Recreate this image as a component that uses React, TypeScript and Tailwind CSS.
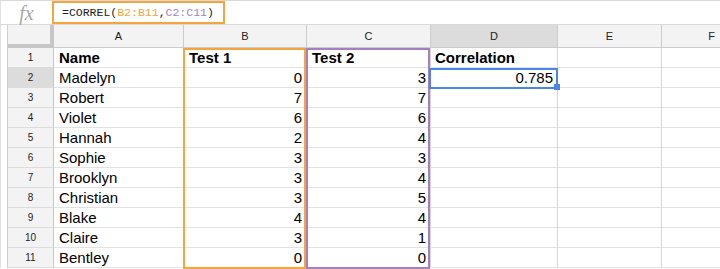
import React from "react";

export default function App() {
  const rows: [string, string, string, string][] = [
    ["Name", "Test 1", "Test 2", "Correlation"],
    ["Madelyn", "0", "3", "0.785"],
    ["Robert", "7", "7", ""],
    ["Violet", "6", "6", ""],
    ["Hannah", "2", "4", ""],
    ["Sophie", "3", "3", ""],
    ["Brooklyn", "3", "4", ""],
    ["Christian", "3", "5", ""],
    ["Blake", "4", "4", ""],
    ["Claire", "3", "1", ""],
    ["Bentley", "0", "0", ""],
  ];
  const cols = ["A", "B", "C", "D", "E", "F"];
  const cell =
    "h-[20px] border-r border-b border-r-[#d6d6d6] border-b-[#e2e2e2] text-[15px] leading-[20px] text-black whitespace-nowrap overflow-hidden";

  return (
    <div className="relative h-[269px] w-[720px] overflow-hidden bg-white font-['Liberation_Sans',Arial,sans-serif]">
      {/* formula bar */}
      <div className="flex h-[25px] border-t border-b border-[#d9d9d9]">
        <div className="flex w-[52px] items-center justify-center border-l border-[#e0e0e0]">
          <span className="font-['Liberation_Serif',serif] text-[20px] italic leading-none text-[#a8a8a8]">fx</span>
        </div>
        <div className="flex w-[173px] items-center border-2 border-[#f6a53c] pl-[8px] font-['Liberation_Mono',monospace] text-[11.5px] text-[#222]">
          <span>=CORREL(</span>
          <span className="text-[#f5a33a]">B2:B11</span>
          <span>,</span>
          <span className="text-[#a67fc0]">C2:C11</span>
          <span>)</span>
        </div>
      </div>

      {/* sheet */}
      <div className="border-l border-[#e0e0e0] pl-[6px]">
        <div className="grid grid-cols-[46px_130px_123px_124px_127px_104px_100px] border-l border-[#d0d0d0]">
          <div className="h-[23px] border-r-4 border-b-4 border-[#c6c6c6] bg-[#f3f3f3]" />
          {cols.map((c) => (
            <div
              key={c}
              className={`flex h-[23px] items-center justify-center border-r border-b border-[#cccccc] text-[11px] text-[#222] ${
                c === "D" ? "bg-[#dcdcdc]" : "bg-[#f3f3f3]"
              }`}
            >
              {c}
            </div>
          ))}

          {rows.map((r, i) => (
            <React.Fragment key={i}>
              <div
                className={`flex h-[20px] items-center justify-center border-r border-b border-r-[#c6c6c6] border-b-[#dcdcdc] text-[10px] text-[#222] ${
                  i === 1 ? "bg-[#dcdcdc]" : "bg-[#f3f3f3]"
                }`}
              >
                {i + 1}
              </div>
              <div className={`${cell} pl-[5px] ${i === 0 ? "font-bold" : ""}`}>{r[0]}</div>
              <div className={`${cell} ${i === 0 ? "pl-[5px] font-bold" : "pr-[4px] text-right"}`}>{r[1]}</div>
              <div className={`${cell} ${i === 0 ? "pl-[5px] font-bold" : "pr-[4px] text-right"}`}>{r[2]}</div>
              <div className={`${cell} ${i === 0 ? "pl-[4px] font-bold" : "pr-[4px] text-right"}`}>{r[3]}</div>
              <div className={cell} />
              <div className={cell} />
            </React.Fragment>
          ))}
        </div>
      </div>

      {/* range highlights */}
      <div className="pointer-events-none absolute left-[183px] top-[48px] h-[221px] w-[123px] border-2 border-[#f6a53c]" />
      <div className="pointer-events-none absolute left-[306px] top-[48px] h-[221px] w-[124px] border-2 border-[#a67fc0]" />
      <div className="pointer-events-none absolute left-[429px] top-[68px] h-[21px] w-[129px] border-2 border-[#4a86e8]" />
      <div className="pointer-events-none absolute left-[554px] top-[84px] h-[6px] w-[6px] bg-[#4a86e8]" />
    </div>
  );
}
